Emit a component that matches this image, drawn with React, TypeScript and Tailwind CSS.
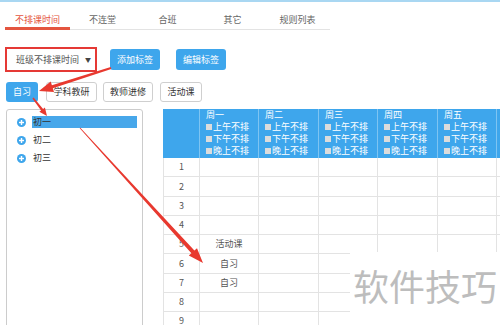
import React from "react";

const blue = "bg-[#3ea6ec]";

function arrowPts(
  x1: number,
  y1: number,
  x2: number,
  y2: number,
  w1: number,
  w2: number,
  hl: number,
  hw: number
) {
  const dx = x2 - x1;
  const dy = y2 - y1;
  const L = Math.hypot(dx, dy);
  const ux = dx / L;
  const uy = dy / L;
  const nx = -uy;
  const ny = ux;
  const bx = x2 - ux * hl;
  const by = y2 - uy * hl;
  const p = [
    [x1 + (nx * w1) / 2, y1 + (ny * w1) / 2],
    [bx + (nx * w2) / 2, by + (ny * w2) / 2],
    [bx + (nx * hw) / 2, by + (ny * hw) / 2],
    [x2, y2],
    [bx - (nx * hw) / 2, by - (ny * hw) / 2],
    [bx - (nx * w2) / 2, by - (ny * w2) / 2],
    [x1 - (nx * w1) / 2, y1 - (ny * w1) / 2],
  ];
  return p.map((q) => q.map((v) => v.toFixed(1)).join(",")).join(" ");
}

const tabs = ["不排课时间", "不连堂", "合班", "其它", "规则列表"];
const days = ["周一", "周二", "周三", "周四", "周五", ""];
const dayW = ["w-[59px]", "w-[60px]", "w-[59px]", "w-[60px]", "w-[59px]", "w-[60px]"];
const body: Record<number, string> = { 5: "活动课", 6: "自习", 7: "自习" };

function Box() {
  return <span className="inline-block w-[6px] h-[6px] bg-[#dcdcdc] mr-[1px] align-[0px]" />;
}

function Plus() {
  return (
    <svg width="9" height="9" viewBox="0 0 10 10">
      <circle cx="5" cy="5" r="5" fill="#3ea6ec" />
      <rect x="2.2" y="4.2" width="5.6" height="1.6" fill="#fff" />
      <rect x="4.2" y="2.2" width="1.6" height="5.6" fill="#fff" />
    </svg>
  );
}

export default function App() {
  return (
    <div className="relative w-[500px] h-[325px] overflow-hidden bg-white text-[9px] text-[#333] font-['Microsoft_YaHei','Noto_Sans_CJK_SC',sans-serif]">
      <div className="h-[2px] bg-[#a9d7f2]" />

      {/* tabs */}
      <div className="ml-[5px] w-[325px] flex border-b border-[#e3e3e3]">
        {tabs.map((t, i) => (
          <div
            key={t}
            className={`relative w-[65px] h-[27px] pt-[12px] leading-[12px] text-center ${
              i === 0 ? "text-[#e4553f]" : "text-[#666]"
            }`}
          >
            {t}
            {i === 0 && <div className="absolute left-0 right-0 bottom-[-1px] h-[3px] bg-[#e4553f]" />}
          </div>
        ))}
      </div>

      {/* controls row */}
      <div className="mt-[17px] flex items-center">
        <div className="ml-[5px] w-[92px] h-[25px] border-2 border-[#e53935] flex items-center pl-[9px] pr-[4px] text-[#555]">
          <span className="flex-1">班级不排课时间</span>
          <span className="text-[6px] text-[#444]">▼</span>
        </div>
        <div className={`ml-[13px] w-[50px] h-[21px] rounded-[3px] ${blue} text-white flex items-center justify-center`}>
          添加标签
        </div>
        <div className={`ml-[16px] w-[50px] h-[21px] rounded-[3px] ${blue} text-white flex items-center justify-center`}>
          编辑标签
        </div>
      </div>

      {/* tag row */}
      <div className="mt-[10px] flex items-center h-[20px]">
        <div className={`ml-[6px] w-[32px] h-[20px] rounded-[3px] ${blue} text-white flex items-center justify-center`}>
          自习
        </div>
        <div className="ml-[8px] w-[51px] h-[20px] rounded-[3px] border border-[#cfcfcf] flex items-center justify-center">
          学科教研
        </div>
        <div className="ml-[6px] w-[50px] h-[20px] rounded-[3px] border border-[#cfcfcf] flex items-center justify-center">
          教师进修
        </div>
        <div className="ml-[7px] w-[42px] h-[20px] rounded-[3px] border border-[#cfcfcf] flex items-center justify-center">
          活动课
        </div>
      </div>

      {/* main */}
      <div className="mt-[7px] flex items-start">
        <div className="ml-[6px] w-[137px] shrink-0 h-[240px] border border-[#cccccc] rounded-t-[3px] pt-[3px]">
          {["初一", "初二", "初三"].map((n, i) => (
            <div key={n} className="h-[18px] flex items-center pl-[10px]">
              <Plus />
              <span
                className={`ml-[6px] h-[12px] leading-[12px] pl-[1px] ${
                  i === 0 ? "w-[105px] bg-[#47a7ea]" : ""
                }`}
              >
                {n}
              </span>
            </div>
          ))}
        </div>

        <div className="ml-[20px] shrink-0">
          <div className={`flex h-[49px] ${blue} text-white`}>
            <div className="w-[36px] shrink-0" />
            {days.map((d, i) => (
              <div key={i} className={`${dayW[i]} shrink-0 border-l border-[#7ec4f2] pl-[6px] leading-[12px]`}>
                {d && (
                  <>
                    <div>{d}</div>
                    <div className="whitespace-nowrap"><Box />上午不排</div>
                    <div className="whitespace-nowrap"><Box />下午不排</div>
                    <div className="whitespace-nowrap"><Box />晚上不排</div>
                  </>
                )}
              </div>
            ))}
          </div>
          {[1, 2, 3, 4, 5, 6, 7, 8, 9].map((r) => (
            <div key={r} className="flex h-[19.25px] border-b border-[#e3e3e3] text-[#555]">
              <div className="w-[36px] shrink-0 border-l border-[#e3e3e3] flex items-center justify-center">{r}</div>
              {days.map((d, i) => (
                <div
                  key={i}
                  className={`${dayW[i]} shrink-0 border-l border-[#e3e3e3] flex items-center justify-center`}
                >
                  {i === 0 ? body[r] ?? "" : ""}
                </div>
              ))}
            </div>
          ))}
        </div>
      </div>

      {/* watermark */}
      <div className="absolute left-[350px] top-[252px] w-[150px] h-[73px] bg-white pl-[3px] pt-[15px] text-[36px] leading-[36px] text-[#bdbdbd] whitespace-nowrap">
        软件技巧
      </div>

      {/* annotation arrows */}
      <svg className="absolute left-0 top-0 pointer-events-none" width="500" height="325">
        <polygon fill="#e8392f" points={arrowPts(111, 68, 39, 91, 2, 3, 14, 11)} />
        <polygon fill="#e8392f" points={arrowPts(33, 98, 47, 116, 1.5, 2.5, 8, 7)} />
        <polygon fill="#e8392f" points={arrowPts(80, 128, 203, 263, 0.8, 4, 15, 11)} />
      </svg>
    </div>
  );
}
